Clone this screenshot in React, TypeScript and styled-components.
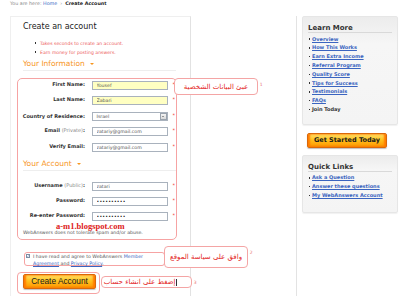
import React from "react";
import styled, { createGlobalStyle } from "styled-components";

const Global = createGlobalStyle`
  html, body { margin: 0; padding: 0; background: #fff; }
  body { font-family: "DejaVu Sans", Verdana, sans-serif; }
  * { box-sizing: border-box; }
`;

const Page = styled.div`
  width: 400px;
  height: 296px;
  overflow: hidden;
  background: #fff;
`;

const Breadcrumb = styled.div`
  height: 16px;
  padding: 1px 0 0 10px;
  font-size: 4.8px;
  line-height: 6px;
  color: #888;
  white-space: nowrap;
`;

const CrumbLink = styled.span`
  color: #3b66c4;
`;

const CrumbSep = styled.span`
  margin: 0 3px;
  color: #999;
`;

const CrumbCurrent = styled.span`
  color: #222;
  font-weight: bold;
`;

const Main = styled.div`
  display: flex;
  height: 280px;
  padding-left: 10px;
`;

const Panel = styled.section`
  width: 181px;
  flex: none;
  border: 1px solid #efefef;
  border-right-color: #e2e2e2;
  border-bottom: none;
  padding: 5px 0 0 12px;
`;

const Title = styled.h1`
  margin: 0;
  font-size: 8px;
  line-height: 10px;
  font-weight: normal;
  color: #222;
`;

const PerkList = styled.ul`
  margin: 6.5px 0 0;
  padding: 0 0 0 17px;
  list-style: none;
`;

const Perk = styled.li`
  position: relative;
  font-size: 4.6px;
  line-height: 9px;
  color: #ec5a5a;
  &::before {
    content: "";
    position: absolute;
    left: -5px;
    top: 3.8px;
    width: 1.4px;
    height: 1.4px;
    background: #333;
  }
`;

const SectionHeading = styled.h2<{ $inset?: boolean }>`
  margin: ${(p) => (p.$inset ? "7px 0 0 5px" : "2.5px 0 0 0")};
  width: 153px;
  font-size: 7.5px;
  line-height: 10px;
  font-weight: normal;
  color: #f7961e;
  padding-bottom: 1px;
  border-bottom: 1px solid #eeeeee;
`;

const Caret = styled.span`
  display: inline-block;
  margin-left: 5px;
  vertical-align: middle;
  border-left: 2px solid transparent;
  border-right: 2px solid transparent;
  border-top: 2.5px solid #f7961e;
`;

const FormGroup = styled.div`
  position: relative;
  margin: 7px 0 0 -6px;
  width: 160px;
  border: 1px solid #f6a3a3;
  border-radius: 5px;
  padding: 2px 0 3px 0;
`;

const FieldList = styled.div<{ $gapTop?: number }>`
  display: flex;
  flex-direction: column;
  gap: 6.4px;
  margin-top: ${(p) => p.$gapTop ?? 0}px;
`;

const Row = styled.div`
  display: flex;
  align-items: flex-start;
  height: 9px;
`;

const Label = styled.label<{ $center?: boolean }>`
  width: 67px;
  margin-right: 7px;
  text-align: right;
  font-size: 5px;
  font-weight: bold;
  line-height: ${(p) => (p.$center ? "9px" : "6px")};
  color: #333;
  white-space: nowrap;
`;

const LabelNote = styled.span`
  font-weight: normal;
  color: #888;
`;

const TextField = styled.input<{ $filled?: boolean; $secret?: boolean }>`
  width: 76px;
  height: 9px;
  margin: 0;
  border: 1px solid #a9b2bd;
  border-radius: 0;
  background: ${(p) => (p.$filled ? "#ffffc2" : "#fff")};
  padding: 0 0 0 3.5px;
  font-family: "DejaVu Sans", Verdana, sans-serif;
  font-size: ${(p) => (p.$secret ? "4.6px" : "4.7px")};
  letter-spacing: ${(p) => (p.$secret ? "0.2px" : "0")};
  color: ${(p) => (p.$secret ? "#111" : "#555")};
  outline: none;
`;

const SelectBox = styled.div`
  width: 76px;
  height: 9px;
  border: 1px solid #a9b2bd;
  display: flex;
  align-items: center;
  justify-content: space-between;
  padding: 0 0.5px 0 3.5px;
  font-size: 4.7px;
  color: #555;
`;

const SelectArrow = styled.span`
  width: 7px;
  height: 6.5px;
  border: 1px solid #9aa3ad;
  background: linear-gradient(#f4f4f4, #d9d9d9);
  display: flex;
  align-items: center;
  justify-content: center;
  &::after {
    content: "";
    border-left: 1.3px solid transparent;
    border-right: 1.3px solid transparent;
    border-top: 1.6px solid #444;
  }
`;

const Required = styled.span`
  margin-left: 4.5px;
  font-size: 5px;
  line-height: 7px;
  color: #f03c3c;
`;

const Watermark = styled.div`
  margin: 0.3px 0 0 38px;
  font-family: "Liberation Serif", "Times New Roman", serif;
  font-weight: bold;
  font-size: 8.5px;
  line-height: 8px;
  color: #dd2020;
`;

const Note = styled.p`
  margin: 0.3px 0 0;
  padding-left: 5px;
  font-size: 4.7px;
  line-height: 6px;
  color: #555;
`;

const Callout = styled.div<{ $l: number; $t: number; $w: number; $h: number; $end?: boolean }>`
  position: absolute;
  left: ${(p) => p.$l}px;
  top: ${(p) => p.$t}px;
  width: ${(p) => p.$w}px;
  height: ${(p) => p.$h}px;
  border: 1px solid #f4a5a5;
  border-radius: 4px;
  background: #fff;
  display: flex;
  align-items: center;
  justify-content: ${(p) => (p.$end ? "flex-start" : "center")};
  padding-right: ${(p) => (p.$end ? "14px" : "0")};
  direction: rtl;
  font-size: 7px;
  color: #e31b1b;
  white-space: nowrap;
`;

const CalloutNum = styled.span`
  position: absolute;
  right: -5.5px;
  top: 3px;
  font-size: 4.5px;
  line-height: 5px;
  color: #e87070;
  direction: ltr;
`;

const Cursor = styled.span`
  display: inline-block;
  width: 0.6px;
  height: 7px;
  background: #333;
  margin-left: 1px;
`;

const AgreeBox = styled.div`
  position: relative;
  margin: 12.5px 0 0 1px;
  width: 141px;
  height: 14px;
  border: 1px solid #f6a3a3;
  border-radius: 3px;
  padding-left: 1px;
  display: flex;
  align-items: flex-start;
`;

const CheckBox = styled.span`
  flex: none;
  width: 4px;
  height: 4px;
  margin: 0.7px 3px 0 0;
  border: 0.6px solid #7d8ea3;
  background: #fff;
  display: flex;
  align-items: center;
  justify-content: center;
`;

const AgreeText = styled.div`
  font-size: 4.7px;
  line-height: 7px;
  color: #555;
  white-space: nowrap;
`;

const TextLink = styled.span<{ $under?: boolean }>`
  color: #3a64c0;
  text-decoration: ${(p) => (p.$under ? "underline" : "none")};
  text-decoration-thickness: 0.3px;
`;

const ButtonBox = styled.div`
  position: relative;
  margin: 5.5px 0 0 -6px;
  width: 83px;
  border: 1px solid #f6a3a3;
  border-radius: 4px;
  padding: 1px 0 4px 5px;
`;

const OrangeButton = styled.button<{ $w: number; $size: number; $sans?: boolean }>`
  display: flex;
  align-items: center;
  justify-content: center;
  width: ${(p) => p.$w}px;
  height: 15px;
  margin: 0;
  padding: 0;
  border: 1px solid #d9680a;
  border-radius: 2px;
  background: linear-gradient(180deg, #ffe16a 0%, #ffc21f 45%, #ffa40a 80%, #f78c00 100%);
  box-shadow: inset 2px 0 2px #ff7a00, inset -2px 0 2px #ff7a00, 0 1px 1px rgba(0, 0, 0, 0.25);
  font-family: ${(p) => (p.$sans ? '"Liberation Sans", Arial, sans-serif' : '"DejaVu Sans", Verdana, sans-serif')};
  font-weight: ${(p) => (p.$sans ? "normal" : "bold")};
  font-size: ${(p) => p.$size}px;
  color: #1a1a1a;
  white-space: nowrap;
`;

const Sidebar = styled.aside`
  margin-left: 105px;
  width: 102px;
  flex: none;
  border-left: 1px solid #e3e3e3;
  padding-left: 5px;
  display: flex;
  flex-direction: column;
  align-items: flex-start;
`;

const SideBox = styled.div<{ $pb: number; $mt?: number }>`
  width: 96px;
  margin-top: ${(p) => p.$mt ?? 0}px;
  border: 1px solid #e6e6e6;
  border-radius: 2px;
  background: linear-gradient(180deg, #ececec 0%, #f6f6f6 25%, #f4f4f4 100%);
  box-shadow: 0 1px 1px rgba(0, 0, 0, 0.06);
  padding: 7px 5px ${(p) => p.$pb}px 5px;
`;

const SideTitle = styled.h3`
  margin: 0;
  font-size: 7px;
  line-height: 8px;
  font-weight: bold;
  color: #333;
  border-bottom: 1px solid #d9d9d9;
`;

const SideList = styled.ul`
  margin: 1.6px 0 0;
  padding: 0 0 0 4px;
  list-style: none;
`;

const SideItem = styled.li<{ $plain?: boolean }>`
  position: relative;
  font-size: 5px;
  line-height: 8.8px;
  font-weight: bold;
  white-space: nowrap;
  color: ${(p) => (p.$plain ? "#333" : "#3a64c0")};
  text-decoration: ${(p) => (p.$plain ? "none" : "underline")};
  text-decoration-thickness: 0.4px;
  &::before {
    content: "";
    position: absolute;
    left: -3.5px;
    top: 3.9px;
    width: 1.3px;
    height: 1.3px;
    background: #333;
  }
`;

const GetStarted = styled(OrangeButton)`
  margin: 8px 0 0 5px;
`;

const learnMore = [
  "Overview",
  "How This Works",
  "Earn Extra Income",
  "Referral Program",
  "Quality Score",
  "Tips for Success",
  "Testimonials",
  "FAQs",
];

const quickLinks = ["Ask a Question", "Answer these questions", "My WebAnswers Account"];

export default function App() {
  return (
    <Page>
      <Global />
      <Breadcrumb>
        You are here: <CrumbLink>Home</CrumbLink>
        <CrumbSep>›</CrumbSep>
        <CrumbCurrent>Create Account</CrumbCurrent>
      </Breadcrumb>
      <Main>
        <Panel>
          <Title>Create an account</Title>
          <PerkList>
            <Perk>Takes seconds to create an account.</Perk>
            <Perk>Earn money for posting answers.</Perk>
          </PerkList>
          <SectionHeading>
            Your Information<Caret />
          </SectionHeading>
          <FormGroup>
            <FieldList>
              <Row>
                <Label>First Name:</Label>
                <TextField $filled readOnly value="Yousef" />
                <Required>*</Required>
              </Row>
              <Row>
                <Label>Last Name:</Label>
                <TextField $filled readOnly value="Zabari" />
                <Required>*</Required>
              </Row>
              <Row>
                <Label $center>Country of Residence:</Label>
                <SelectBox>
                  Israel
                  <SelectArrow />
                </SelectBox>
                <Required>*</Required>
              </Row>
              <Row>
                <Label>
                  Email <LabelNote>(Private)</LabelNote>:
                </Label>
                <TextField readOnly value="zatariy@gmail.com" />
                <Required>*</Required>
              </Row>
              <Row>
                <Label>Verify Email:</Label>
                <TextField readOnly value="zatariy@gmail.com" />
                <Required>*</Required>
              </Row>
            </FieldList>
            <SectionHeading $inset>
              Your Account<Caret />
            </SectionHeading>
            <FieldList $gapTop={11}>
              <Row>
                <Label>
                  Username <LabelNote>(Public)</LabelNote>:
                </Label>
                <TextField readOnly value="zatari" />
                <Required>*</Required>
              </Row>
              <Row>
                <Label>Password:</Label>
                <TextField $secret readOnly value="••••••••••" />
                <Required>*</Required>
              </Row>
              <Row>
                <Label>Re-enter Password:</Label>
                <TextField $secret readOnly value="••••••••••" />
                <Required>*</Required>
              </Row>
            </FieldList>
            <Watermark>a-m1.blogspot.com</Watermark>
            <Note>WebAnswers does not tolerate spam and/or abuse.</Note>
            <Callout $l={156} $t={-1} $w={84} $h={17}>
              عبئ البيانات الشخصية
              <CalloutNum>1</CalloutNum>
            </Callout>
          </FormGroup>
          <AgreeBox>
            <CheckBox>
              <svg width="4" height="4" viewBox="0 0 8 8">
                <path d="M1 4.2 L3.2 6.4 L7 1.2" fill="none" stroke="#2c55a8" strokeWidth="1.6" />
              </svg>
            </CheckBox>
            <AgreeText>
              I have read and agree to WebAnswers <TextLink>Member</TextLink>
              <br />
              <TextLink $under>Agreement</TextLink> and <TextLink $under>Privacy Policy</TextLink>.
            </AgreeText>
            <Callout $l={139} $t={-7.5} $w={84} $h={22}>
              وافق على سياسة الموقع
              <CalloutNum>2</CalloutNum>
            </Callout>
          </AgreeBox>
          <ButtonBox>
            <OrangeButton $w={73} $size={8.3} $sans>
              Create Account
            </OrangeButton>
            <Callout $l={83} $t={3} $w={91} $h={12.5} $end>
              <Cursor />
              إضغط على انشاء حساب
              <CalloutNum>3</CalloutNum>
            </Callout>
          </ButtonBox>
        </Panel>
        <Sidebar>
          <SideBox $pb={10}>
            <SideTitle>Learn More</SideTitle>
            <SideList>
              {learnMore.map((t) => (
                <SideItem key={t}>{t}</SideItem>
              ))}
              <SideItem $plain>Join Today</SideItem>
            </SideList>
          </SideBox>
          <GetStarted $w={80} $size={6.5}>
            Get Started Today
          </GetStarted>
          <SideBox $pb={12} $mt={7}>
            <SideTitle>Quick Links</SideTitle>
            <SideList>
              {quickLinks.map((t) => (
                <SideItem key={t}>{t}</SideItem>
              ))}
            </SideList>
          </SideBox>
        </Sidebar>
      </Main>
    </Page>
  );
}
